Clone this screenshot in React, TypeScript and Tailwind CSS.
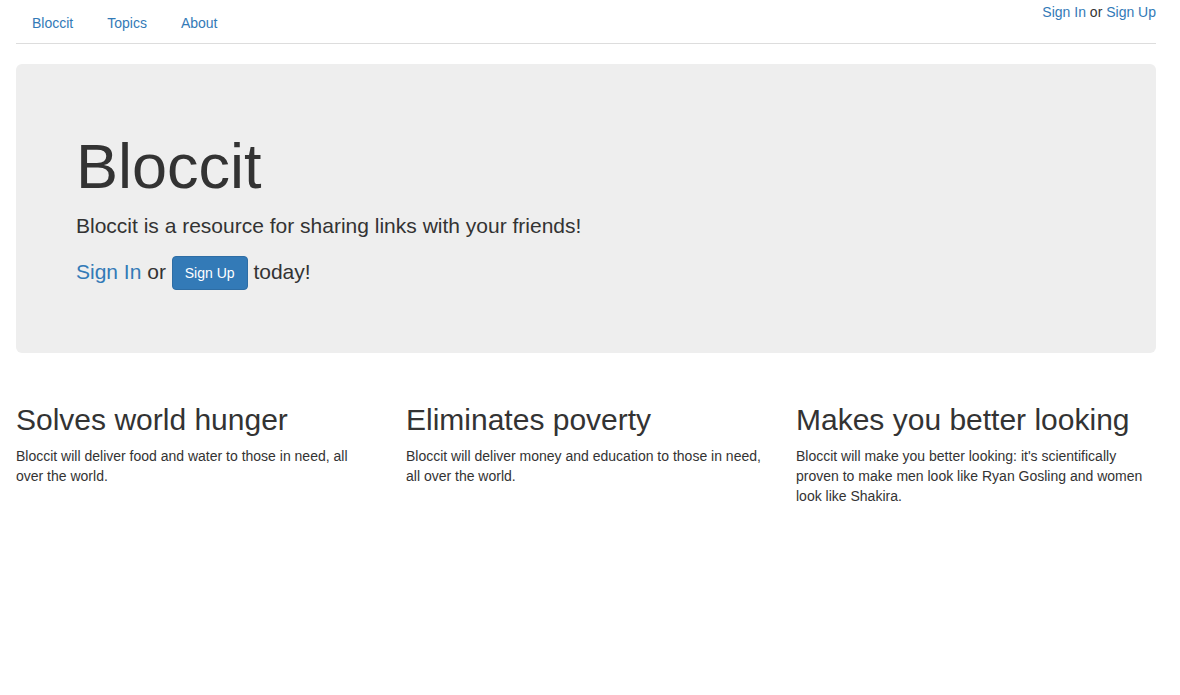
export default function App() {
  return (
    <div className="min-h-[695px] bg-white text-[14px] leading-[20px] text-[#333] font-['Liberation_Sans',Arial,sans-serif]">
      <div className="ml-4 w-[1140px] pt-[3px]">
        <div className="flex items-start border-b border-[#ddd]">
          <ul className="flex">
            <li>
              <a href="#" className="block px-4 py-[10px] text-[#337ab7]">Bloccit</a>
            </li>
            <li className="ml-[2px]">
              <a href="#" className="block px-4 py-[10px] text-[#337ab7]">Topics</a>
            </li>
            <li className="ml-[2px]">
              <a href="#" className="block px-4 py-[10px] text-[#337ab7]">About</a>
            </li>
          </ul>
          <div className="ml-auto -mt-px">
            <a href="#" className="text-[#337ab7]">Sign In</a> or{" "}
            <a href="#" className="text-[#337ab7]">Sign Up</a>
          </div>
        </div>

        <div className="mt-5 rounded-[6px] bg-[#eee] px-[60px] py-12">
          <h1 className="mt-5 mb-[10px] text-[63px] leading-[1.1]">Bloccit</h1>
          <p className="mb-[15px] text-[21px] leading-[30px]">
            Bloccit is a resource for sharing links with your friends!
          </p>
          <p className="mb-[15px] text-[21px] leading-[30px]">
            <a href="#" className="text-[#337ab7]">Sign In</a> or{" "}
            <a
              href="#"
              className="inline-block rounded-[4px] border border-[#2e6da4] bg-[#337ab7] px-3 py-[6px] align-middle text-[14px] leading-[20px] text-white"
            >
              Sign Up
            </a>{" "}
            today!
          </p>
        </div>

        <div className="mt-[30px] grid grid-cols-3 gap-[30px]">
          <div>
            <h2 className="mt-5 mb-[10px] text-[30px] leading-[1.1]">Solves world hunger</h2>
            <p>Bloccit will deliver food and water to those in need, all over the world.</p>
          </div>
          <div>
            <h2 className="mt-5 mb-[10px] text-[30px] leading-[1.1]">Eliminates poverty</h2>
            <p>Bloccit will deliver money and education to those in need, all over the world.</p>
          </div>
          <div>
            <h2 className="mt-5 mb-[10px] text-[30px] leading-[1.1]">Makes you better looking</h2>
            <p>
              Bloccit will make you better looking: it's scientifically proven to make men look like
              Ryan Gosling and women look like Shakira.
            </p>
          </div>
        </div>
      </div>
    </div>
  );
}
